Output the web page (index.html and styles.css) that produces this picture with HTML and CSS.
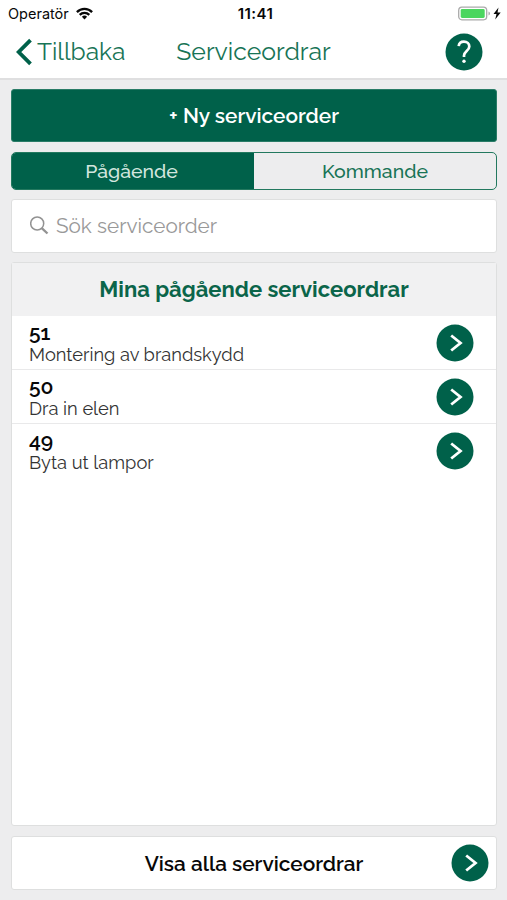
FILE: index.html
```
<!DOCTYPE html>
<html lang="sv">
<head>
<meta charset="utf-8">
<title>Serviceordrar</title>
<link rel="stylesheet" href="styles.css">
</head>
<body>
<header class="top">
  <div class="status">
    <div class="carrier">Operatör
      <svg width="17" height="13" viewBox="0 0 17 13"><g fill="none" stroke="#080808" stroke-width="2.3"><path d="M.9 5.1a10.7 10.7 0 0 1 15.2 0"/><path d="M3.7 7.9a6.8 6.8 0 0 1 9.6 0"/></g><path d="M8.5 12.4 5.9 9.8a3.7 3.7 0 0 1 5.2 0z" fill="#080808"/></svg>
    </div>
    <div class="clock">11:41</div>
    <div class="power">
      <svg width="44" height="16" viewBox="0 0 44 16"><rect x=".7" y="1.2" width="28" height="12.6" rx="3.2" fill="#fff" stroke="#aaa" stroke-width="1.3"/><rect x="2.7" y="3.1" width="24" height="8.8" rx="1.4" fill="#4bd65f"/><path d="M30.5 5.5v4q1.5-.5 1.5-2t-1.5-2z" fill="#aaa"/><path d="M40.5 1.5 35.5 8.1h3L37.2 13.5 42.7 6.6h-3.2z" fill="#080808"/></svg>
    </div>
  </div>
  <nav class="nav">
    <a class="back"><svg width="18" height="28" viewBox="0 0 18 28"><path d="M15.5 2.2 3.7 14 15.5 25.8" fill="none" stroke="#00614a" stroke-width="3.8"/></svg><span>Tillbaka</span></a>
    <h1 class="title">Serviceordrar</h1>
    <a class="help"><svg width="38" height="38" viewBox="0 0 38 38"><circle cx="19" cy="19" r="18.5" fill="#00614a"/><path d="M13.7 13.2c.3-2.9 2.5-4.5 5.2-4.5 3.2 0 5.4 1.9 5.4 4.7 0 4.400-5.300 4.600-5.300 9.200v1.400" fill="none" stroke="#fff" stroke-width="2.7"/><circle cx="19" cy="28.3" r="1.7" fill="#fff"/></svg></a>
  </nav>
</header>
<main class="content">
  <button class="new">+ Ny serviceorder</button>
  <div class="segments">
    <div class="segment active">Pågående</div>
    <div class="segment">Kommande</div>
  </div>
  <div class="search">
    <svg width="20" height="20" viewBox="0 0 20 20" fill="none" stroke="#929292"><circle cx="7.2" cy="7.5" r="6.5" stroke-width="1.5"/><path d="m12 12.3 5.5 5.2" stroke-width="2.3"/></svg>
    <span>Sök serviceorder</span>
  </div>
  <section class="panel">
    <h2 class="panel-title">Mina pågående serviceordrar</h2>
    <div class="order">
      <div><div class="number">51</div><div class="desc">Montering av brandskydd</div></div>
      <svg class="go" viewBox="0 0 38 38"><circle cx="19" cy="19" r="18.5"/><path d="m15.2 11.5 9.3 7.5-9.3 7.5"/></svg>
    </div>
    <div class="order">
      <div><div class="number">50</div><div class="desc">Dra in elen</div></div>
      <svg class="go" viewBox="0 0 38 38"><circle cx="19" cy="19" r="18.5"/><path d="m15.2 11.5 9.3 7.5-9.3 7.5"/></svg>
    </div>
    <div class="order">
      <div><div class="number">49</div><div class="desc">Byta ut lampor</div></div>
      <svg class="go" viewBox="0 0 38 38"><circle cx="19" cy="19" r="18.5"/><path d="m15.2 11.5 9.3 7.5-9.3 7.5"/></svg>
    </div>
  </section>
  <div class="all">
    <span></span><span class="all-label">Visa alla serviceordrar</span>
    <svg class="go" viewBox="0 0 38 38"><circle cx="19" cy="19" r="18.5"/><path d="m15.2 11.5 9.3 7.5-9.3 7.5"/></svg>
  </div>
</main>
</body>
</html>
```
FILE: styles.css
```
* { box-sizing: border-box; }
body {
  margin: 0;
  width: 507px;
  height: 900px;
  display: flex;
  flex-direction: column;
  background: #ededee;
  font-family: Raleway, Lato, sans-serif;
  color: #080808;
}
svg { display: block; flex: none; }
h1, h2 { margin: 0; }
.top {
  height: 80px;
  background: #fff;
  border-bottom: 2px solid #dfdfe0;
}
.status {
  height: 28px;
  display: grid;
  grid-template-columns: 1fr auto 1fr;
  align-items: center;
  padding: 0 5px 0 8px;
  font: 14.5px/28px Inter, sans-serif;
}
.carrier { display: flex; align-items: center; gap: 7px; }
.carrier svg { margin-top: -1px; }
.clock { font-weight: 600; font-size: 15px; letter-spacing: 0.4px; padding-left: 1px; }
.power { display: flex; justify-content: flex-end; }
.nav {
  height: 47px;
  display: grid;
  grid-template-columns: 1fr auto 1fr;
  align-items: center;
  padding: 0 24px 0 15px;
  color: #187456;
}
.back {
  display: flex;
  align-items: center;
  gap: 4px;
  font-size: 24.5px;
  line-height: 30px;
}
.title { font-size: 24.8px; font-weight: 400; line-height: 30px; margin-right: -9px; }
.help { justify-self: end; }
.content {
  flex: 1;
  display: flex;
  flex-direction: column;
  padding: 9px 10px 10px 11px;
}
.new {
  height: 53px;
  border: 1px solid #2a7c67;
  border-radius: 3px;
  background: #00614a;
  color: #fff;
  font: 600 20.8px/26px Raleway, Lato, sans-serif;
  padding: 1px 0 0;
}
.segments {
  height: 38px;
  margin-top: 10px;
  display: grid;
  grid-template-columns: 1fr 1fr;
  border: 1.5px solid #23795f;
  border-radius: 5px;
  overflow: hidden;
}
.segment {
  color: #187456;
  font-size: 19.5px;
  font-weight: 500;
  line-height: 37px;
  text-align: center;
}
.segment.active { background: #00614a; color: #d2e6df; padding-right: 3px; }
.search {
  height: 54px;
  margin-top: 9px;
  display: flex;
  align-items: center;
  gap: 6px;
  padding-left: 18px;
  background: #fff;
  border: 1px solid #dedfdf;
  border-radius: 3px;
  color: #999;
  font-size: 20.7px;
}
.panel {
  flex: 1;
  margin-top: 9px;
  background: #fff;
  border: 1px solid #dedfdf;
  border-radius: 3px;
}
.panel-title {
  height: 53px;
  background: #f1f1f2;
  color: #0b654a;
  font-size: 22px;
  line-height: 53px;
  text-align: center;
}
.order {
  height: 54px;
  display: flex;
  align-items: center;
  justify-content: space-between;
  padding: 0 22.5px 0 17px;
  border-bottom: 1px solid #e9e9ea;
}
.order:last-child { height: 53px; border-bottom: 0; }
.number { height: 25px; padding-top: 5px; font-size: 21px; font-weight: 600; line-height: 20px; }
.desc { font-size: 18.3px; line-height: 24px; color: #333; }
.go { width: 38px; height: 38px; }
.go circle { fill: #00614a; }
.go path { fill: none; stroke: #fff; stroke-width: 2.8; }
.all {
  height: 54px;
  margin-top: 10px;
  display: grid;
  grid-template-columns: 1fr auto 1fr;
  align-items: center;
  padding: 0 7px;
  background: #fff;
  border: 1px solid #dedfdf;
  border-radius: 3px;
}
.all-label { font-size: 20.8px; font-weight: 600; }
.all .go { justify-self: end; }
```
